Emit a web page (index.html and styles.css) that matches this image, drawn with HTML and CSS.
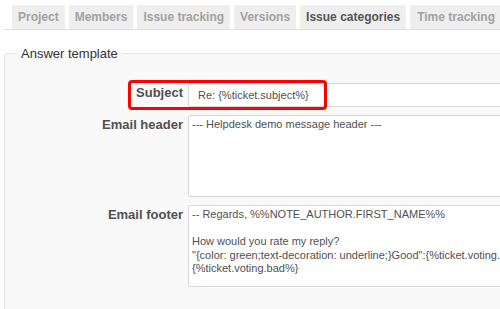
FILE: index.html
```html
<!DOCTYPE html>
<html lang="en">
<head>
    <meta charset="UTF-8">
    <title>Project settings - Helpdesk</title>
    <link rel="stylesheet" href="styles.css">
</head>
<body>
    <div class="page">
        <ul class="tabs">
            <li><a href="#">Project</a></li>
            <li><a href="#">Members</a></li>
            <li><a href="#">Issue tracking</a></li>
            <li><a href="#">Versions</a></li>
            <li><a href="#" class="selected">Issue categories</a></li>
            <li><a href="#" class="last">Time tracking</a></li>
        </ul>

        <fieldset class="box">
            <legend>Answer template</legend>

            <div class="row">
                <label for="subject">Subject</label>
                <input type="text" id="subject" value="Re: {%ticket.subject%}">
                <span class="highlight"></span>
            </div>

            <div class="row">
                <label for="header">Email header</label>
                <textarea id="header">--- Helpdesk demo message header ---</textarea>
            </div>

            <div class="row">
                <label for="footer">Email footer</label>
                <textarea id="footer">-- Regards, %%NOTE_AUTHOR.FIRST_NAME%%

How would you rate my reply?
"{color: green;text-decoration: underline;}Good":{%ticket.voting.good%}
{%ticket.voting.bad%}</textarea>
            </div>
        </fieldset>
    </div>
</body>
</html>
```

FILE: styles.css
```css
html, body {
    margin: 0;
    background: #fff;
    overflow: hidden;
}
body {
    font-family: "Liberation Sans", Arial, sans-serif;
    color: #505050;
    width: 500px;
    height: 309px;
}
.page {
    margin-left: 4px;
    width: 600px;
}
.tabs {
    list-style: none;
    margin: 0;
    padding: 5px 0 0 8px;
    display: flex;
    gap: 4px;
    border-bottom: 1px solid #e0e0e0;
}
.tabs a {
    display: block;
    height: 24px;
    line-height: 24px;
    padding: 0 6px;
    background: #eee;
    color: #a2a2a2;
    font-size: 12px;
    font-weight: bold;
    text-decoration: none;
    box-sizing: border-box;
}
.tabs a.selected {
    color: #555;
    border: 1px solid #f4f4d8;
    border-bottom: none;
    line-height: 23px;
    padding: 0 5px;
}
.tabs a.last {
    padding: 0 9px 0 7px;
}
.box {
    margin: 16px 0 0 0;
    padding: 22px 12px 20px 12px;
    border: 1px solid #e4e4e4;
    border-radius: 3px;
    background: #f9f9f9;
    height: 260px;
}
.box legend {
    padding: 0 4px;
    font-size: 13px;
    color: #333;
}
.row {
    position: relative;
    display: flex;
    align-items: flex-start;
    gap: 5px;
    margin-bottom: 8px;
}
.row label {
    width: 166px;
    flex: none;
    text-align: right;
    font-size: 13px;
    font-weight: bold;
    line-height: 16px;
    padding-top: 2px;
}
.row input, .row textarea {
    width: 400px;
    border: 1px solid #d7d7d7;
    border-radius: 2px;
    background: #fff;
    color: #505050;
    font-family: "Liberation Sans", Arial, sans-serif;
    font-size: 11px;
    box-sizing: border-box;
    margin: 0;
    outline: none;
}
.row input {
    height: 24px;
    padding: 0 9px;
}
.row textarea {
    height: 82px;
    padding: 2px 3px;
    line-height: 13.5px;
    resize: none;
    overflow: hidden;
    white-space: pre;
}
.row + .row + .row {
    margin-top: 2px;
}
.highlight {
    position: absolute;
    left: 111px;
    top: -3px;
    width: 199px;
    height: 30px;
    border: 3px solid #f00;
    border-radius: 4px;
    box-sizing: border-box;
}
```
